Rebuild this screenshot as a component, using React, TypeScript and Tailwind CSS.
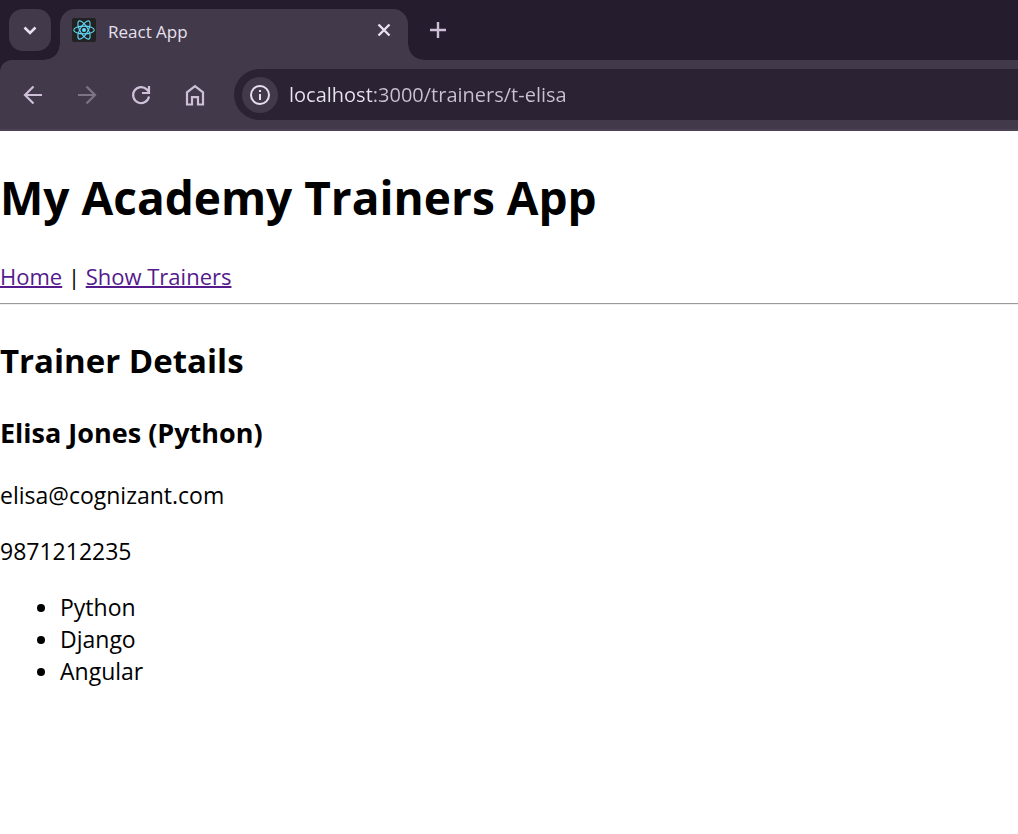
import React, { useState } from "react";

const skills = ["Python", "Django", "Angular"];

function ReactLogo() {
  return (
    <svg className="size-6 shrink-0" viewBox="0 0 24 24" aria-hidden="true">
      <rect width="24" height="24" rx="2" fill="#222222" />
      <g fill="none" stroke="#61dafb" strokeWidth="1.1">
        <ellipse cx="12" cy="12" rx="10.3" ry="3.9" />
        <ellipse cx="12" cy="12" rx="10.3" ry="3.9" transform="rotate(60 12 12)" />
        <ellipse cx="12" cy="12" rx="10.3" ry="3.9" transform="rotate(120 12 12)" />
      </g>
      <circle cx="12" cy="12" r="2" fill="#61dafb" />
    </svg>
  );
}

function Glyph({ d, className, width = 2 }: { d: string; className: string; width?: number }) {
  return (
    <svg
      className={className}
      viewBox="0 0 24 24"
      fill="none"
      stroke="currentColor"
      strokeWidth={width}
      aria-hidden="true"
    >
      <path d={d} />
    </svg>
  );
}

function TabStrip() {
  return (
    <div className="flex h-[60px] items-end bg-[#251c2e] pl-[9px]">
      <button
        aria-label="Search tabs"
        className="mb-[9px] grid size-[42px] place-items-center rounded-[14px] bg-[#423a4b] text-[#e8e0ee]"
      >
        <Glyph className="size-6" width={2.6} d="M6.5 9.5 12 15l5.5-5.5" />
      </button>
      <div className="relative ml-[9px] flex h-[51px] w-[348px] items-center rounded-t-[15px] bg-[#423a4b] px-3 pb-[9px]">
        <span className="absolute bottom-0 -left-[15px] size-[15px] bg-[radial-gradient(circle_at_0_0,transparent_14px,#423a4b_15px)]" />
        <ReactLogo />
        <span className="ml-3 flex-1 pt-1 text-[17px] leading-6 text-[#e8e0ee]">React App</span>
        <button aria-label="Close tab" className="grid size-6 place-items-center text-[#e8e0ee]">
          <Glyph className="size-6" width={2.4} d="m6.5 6.5 11 11m0-11-11 11" />
        </button>
        <span className="absolute -right-[15px] bottom-0 size-[15px] bg-[radial-gradient(circle_at_100%_0,transparent_14px,#423a4b_15px)]" />
      </div>
      <button aria-label="New tab" className="mb-[18px] ml-[18px] size-6 text-[#cdc0d8]">
        <Glyph className="size-6" width={2.4} d="M12 4v16M4 12h16" />
      </button>
    </div>
  );
}

function Toolbar() {
  const [url, setUrl] = useState("localhost:3000/trainers/t-elisa");
  return (
    <div className="bg-[#251c2e]">
      <div className="flex items-center rounded-tl-xl border-b-2 border-[#4b4354] bg-[#423a4b] pt-[9px] pb-[9px] pl-[21px] text-[#cdc0d8]">
        <div className="flex shrink-0 gap-[30px]">
          <button aria-label="Back">
            <Glyph className="size-6" width={2.2} d="M21 12H4.5M12.5 3.5 4 12l8.5 8.5" />
          </button>
          <button aria-label="Forward" disabled className="text-[#7d7486]">
            <Glyph className="size-6" width={2.2} d="M3 12h16.5M11.5 3.5 20 12l-8.5 8.5" />
          </button>
          <button aria-label="Reload">
            <Glyph className="size-6" width={2.2} d="M20 13.5A8 8 0 1 1 17.8 6.4L20 8.8M20 3v7h-7" />
          </button>
          <button aria-label="Home">
            <Glyph className="size-6" width={2.2} d="M4 21.5V9.3L12 3.2l8 6.1v12.2h-5v-7.3H9v7.3z" />
          </button>
        </div>
        <div className="ml-[27px] flex h-[51px] min-w-0 flex-1 items-center rounded-l-full bg-[#2b2334] pl-2">
          <button
            aria-label="View site information"
            className="grid size-9 shrink-0 place-items-center rounded-full bg-[#423a4b] text-[#e8e0ee]"
          >
            <svg className="size-6" viewBox="0 0 24 24" fill="none" stroke="currentColor" strokeWidth="2" aria-hidden="true">
              <circle cx="12" cy="12" r="9" />
              <path d="M12 11v6M12 7v2" />
            </svg>
          </button>
          <input
            aria-label="Address"
            value={url}
            onChange={(e) => setUrl(e.target.value)}
            className="ml-[11px] h-8 min-w-0 flex-1 bg-[linear-gradient(90deg,#eae4f0_83px,#c9c2d0_83px)] bg-clip-text text-xl text-transparent caret-white outline-none"
          />
        </div>
      </div>
    </div>
  );
}

export default function App() {
  return (
    <div className="min-h-screen bg-white font-['Open_Sans','Noto_Sans',sans-serif] text-black">
      <TabStrip />
      <Toolbar />
      <main className="text-[23px] leading-8">
        <h1 className="pt-[34px] text-[46px] leading-[64px] font-bold">My Academy Trainers App</h1>
        <nav className="mt-[31px] text-[22px]">
          <a href="#home" className="text-[#551a8b] underline decoration-2">Home</a>
          {" | "}
          <a href="#trainers" className="text-[#551a8b] underline decoration-2">Show Trainers</a>
        </nav>
        <hr className="mt-[11px] h-[2px] border-0 border-t border-[#9a9a9a] bg-[#eeeeee]" />
        <h2 className="mt-8 text-[33px] leading-[48px] font-bold">Trainer Details</h2>
        <h3 className="mt-[29px] text-[27px] leading-[37px] font-bold">Elisa Jones (Python)</h3>
        <p className="mt-7">elisa@cognizant.com</p>
        <p className="mt-6">9871212235</p>
        <ul className="mt-6 list-disc pl-[60px]">
          {skills.map((skill) => (
            <li key={skill}>{skill}</li>
          ))}
        </ul>
      </main>
    </div>
  );
}
